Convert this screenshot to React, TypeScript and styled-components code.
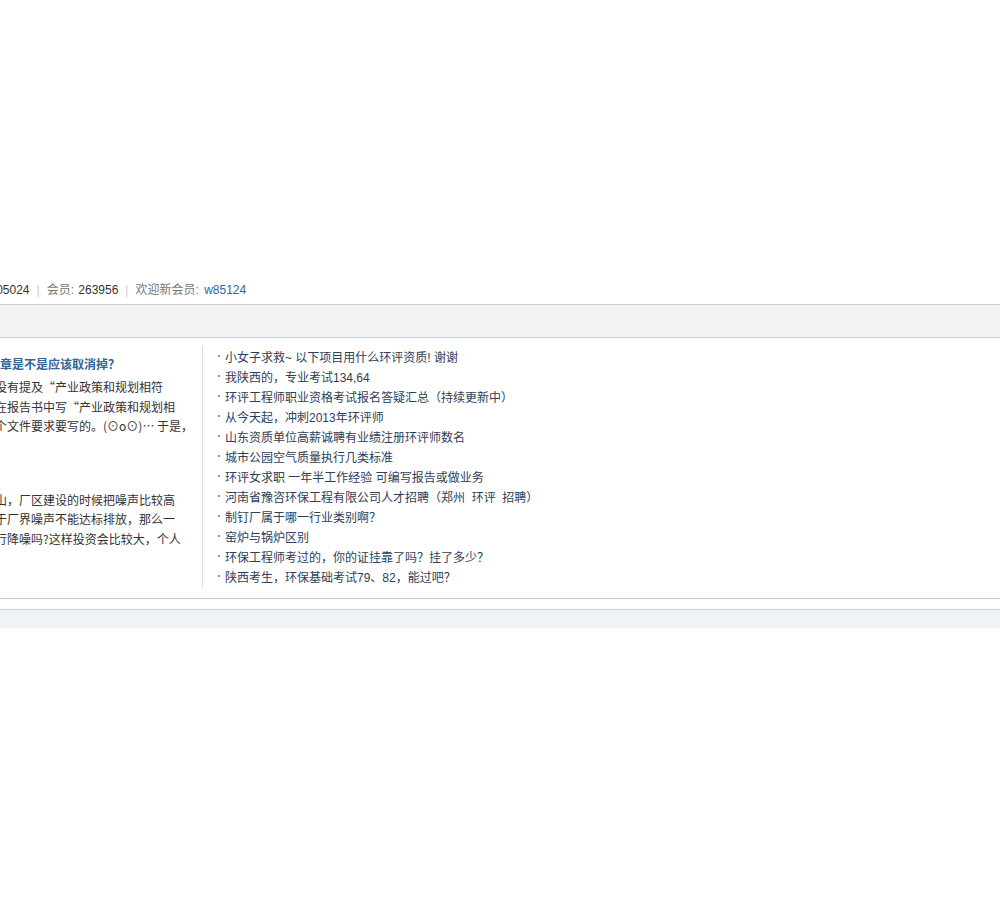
import React from "react";
import styled, { createGlobalStyle } from "styled-components";

const GlobalStyle = createGlobalStyle`
    body {
        margin: 0;
        background: #fff;
        font-family: "Liberation Sans", "Noto Sans CJK SC", sans-serif;
        font-size: 12px;
        color: #333;
    }
`;

const Page = styled.div`
    padding-top: 280px;
    overflow: hidden;
`;

const Stats = styled.div`
    height: 20px;
    line-height: 20px;
    margin-bottom: 4px;
    white-space: nowrap;
    color: #777;
`;

const StatsInner = styled.span`
    margin-left: -48px;
`;

const Num = styled.em`
    font-style: normal;
    margin-left: 1px;
    color: #333;
`;

const Pipe = styled.span`
    margin: 0 7px;
    color: #ccc;
`;

const UserLink = styled.a`
    margin-left: 2px;
    color: #369;
    text-decoration: none;
`;

const Box = styled.div`
    border-top: 1px solid #cdcdcd;
    border-bottom: 1px solid #cdcdcd;
`;

const BoxHead = styled.div`
    height: 32px;
    background: #f2f2f2;
    border-bottom: 1px solid #c2d5e3;
`;

const BoxBody = styled.div`
    display: flex;
    padding: 8px 0 10px;
`;

const LeftCol = styled.div`
    width: 190px;
    margin-right: 12px;
    padding-top: 9px;
    overflow: hidden;
`;

const Item = styled.div<{ $gap?: number }>`
    margin-top: ${(p) => p.$gap || 0}px;
`;

const ItemTitle = styled.div`
    height: 20px;
    line-height: 20px;
    margin-bottom: 2px;
    font-weight: bold;
    color: #369;
    white-space: nowrap;
`;

const Summary = styled.div`
    margin-left: -5px;
    line-height: 19.5px;
    font-family: "Noto Sans CJK SC", "Liberation Sans", sans-serif;
    color: #333;
    white-space: nowrap;
`;

const RightCol = styled.ul`
    margin: 0;
    padding: 2px 0 0 15px;
    list-style: none;
    border-left: 1px solid #ddd;
`;

const Topic = styled.li`
    height: 20px;
    line-height: 20px;
    white-space: pre;
    color: #2e4057;
    &::before {
        content: "";
        display: inline-block;
        width: 2px;
        height: 2px;
        margin-right: 5px;
        vertical-align: 5px;
        background: #999;
    }
`;

const Foot = styled.div`
    margin-top: 10px;
    height: 18px;
    background: #eef3f6;
    border-top: 1px solid #c2d5e3;
`;

const topics = [
    "小女子求救~ 以下项目用什么环评资质! 谢谢",
    "我陕西的，专业考试134,64",
    "环评工程师职业资格考试报名答疑汇总（持续更新中）",
    "从今天起，冲刺2013年环评师",
    "山东资质单位高薪诚聘有业绩注册环评师数名",
    "城市公园空气质量执行几类标准",
    "环评女求职 一年半工作经验 可编写报告或做业务",
    "河南省豫咨环保工程有限公司人才招聘（郑州  环评  招聘）",
    "制钉厂属于哪一行业类别啊？",
    "窑炉与锅炉区别",
    "环保工程师考过的，你的证挂靠了吗？挂了多少？",
    "陕西考生，环保基础考试79、82，能过吧？",
];

const articles = [
    {
        title: "章是不是应该取消掉？",
        lines: [
            "没有提及“产业政策和规划相符",
            "在报告书中写“产业政策和规划相",
            "个文件要求要写的。(⊙o⊙)… 于是，",
        ],
    },
    {
        title: "",
        lines: [
            "山，厂区建设的时候把噪声比较高",
            "于厂界噪声不能达标排放，那么一",
            "行降噪吗?这样投资会比较大，个人",
        ],
    },
];

function App() {
    return (
        <Page>
            <GlobalStyle />
            <Stats>
                <StatsInner>
                    帖子: <Num>1105024</Num>
                </StatsInner>
                <Pipe>|</Pipe>
                会员: <Num>263956</Num>
                <Pipe>|</Pipe>
                欢迎新会员: <UserLink href="#">w85124</UserLink>
            </Stats>
            <Box>
                <BoxHead />
                <BoxBody>
                    <LeftCol>
                        {articles.map((a, i) => (
                            <Item key={i} $gap={i > 0 ? 32 : 0}>
                                <ItemTitle>{a.title}</ItemTitle>
                                {a.lines.map((l) => (
                                    <Summary key={l}>{l}</Summary>
                                ))}
                            </Item>
                        ))}
                    </LeftCol>
                    <RightCol>
                        {topics.map((t) => (
                            <Topic key={t}>{t}</Topic>
                        ))}
                    </RightCol>
                </BoxBody>
            </Box>
            <Foot />
        </Page>
    );
}
export default App;
